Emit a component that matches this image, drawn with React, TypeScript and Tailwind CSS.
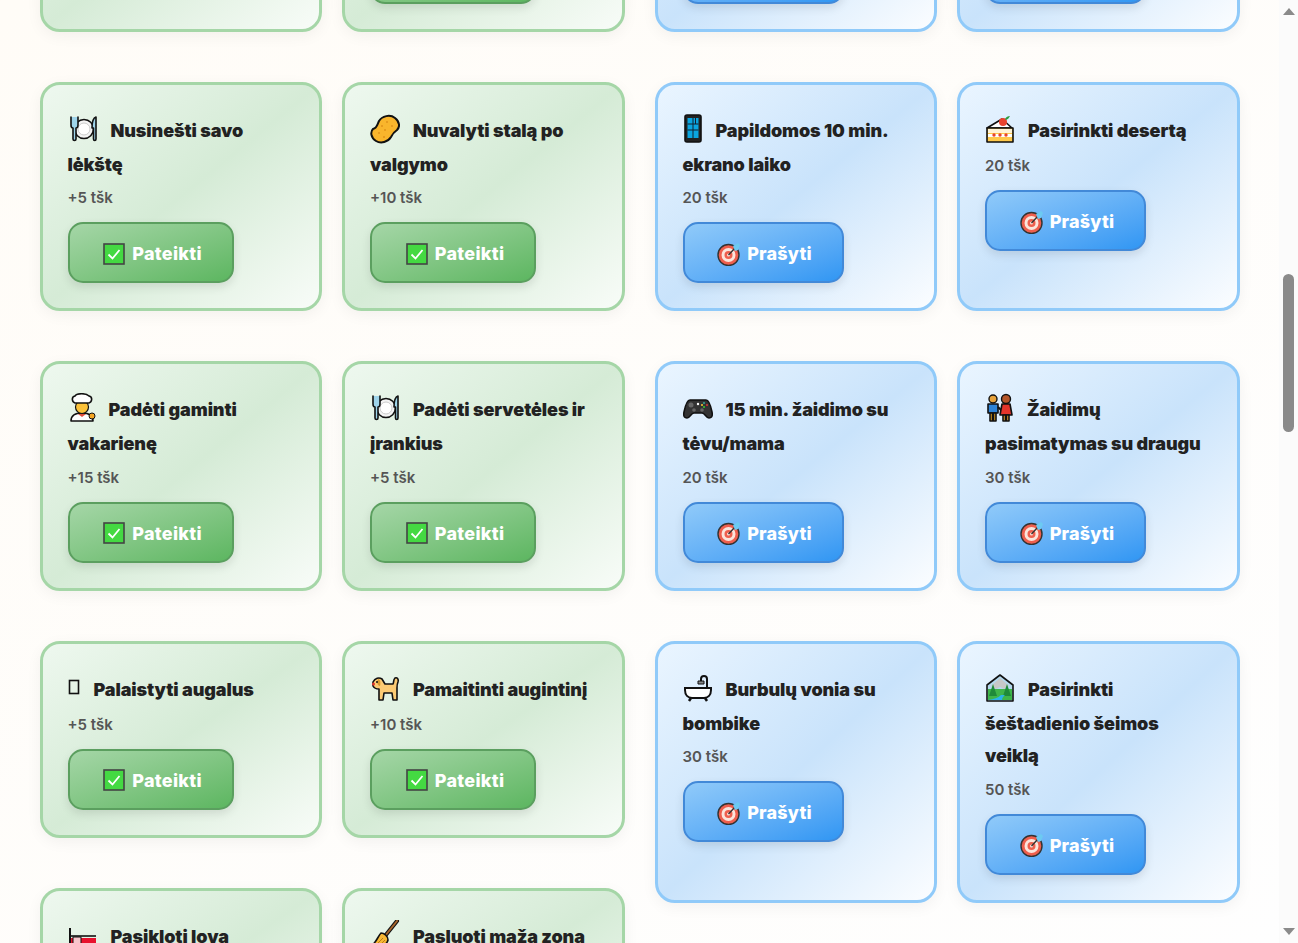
import type { ReactNode } from "react";

const OL = { stroke: "#111", strokeWidth: 1.6, strokeLinejoin: "round" as const, strokeLinecap: "round" as const };

const Svg = ({ w, children }: { w: number; children: ReactNode }) => (
  <svg width={w} height={30} viewBox={`0 0 ${w} 30`} className="mt-[4px] mr-[13px] mb-[5px] inline align-[-12px]">
    {children}
  </svg>
);

const Plate = () => (
  <Svg w={30}>
    <circle cx="16" cy="15" r="9.5" fill="#f4f4f4" {...OL} />
    <circle cx="16" cy="15" r="6" fill="#fff" stroke="#ccc" strokeWidth="1" />
    <path d="M3 3v8c0 2 1 3 2 3v11c0 2 3 2 3 0V14c1 0 2-1 2-3V3" fill="#9fd4ea" {...OL} />
    <path d="M28 3c-3 1-4 5-4 11h1.500v11c0 2 2.500 2 2.500 0Z" fill="#9fd4ea" {...OL} />
  </Svg>
);
const Sponge = () => (
  <Svg w={30}>
    <path d="M3 15c4-1 4-4 6-8 3-5 11-7 16-3s5 9 2 12c-3 2-4 3-6 7-3 5-10 7-15 4S0 18 3 15Z" fill="#f9b52c" stroke="#111" strokeWidth="2" />
    <g fill="#e0931a">
      <circle cx="12" cy="12" r="1" /><circle cx="17" cy="8" r="1" /><circle cx="22" cy="12" r="1" />
      <circle cx="15" cy="16" r="1" /><circle cx="9" cy="19" r="1" /><circle cx="14" cy="23" r="1" />
    </g>
  </Svg>
);
const Phone = () => (
  <Svg w={20}>
    <rect x="2" y="1" width="16" height="27" rx="2" fill="#222" {...OL} />
    <rect x="4.500" y="4" width="11" height="20" fill="#0aa5e0" />
    <path d="M4.500 10h11M4.500 16h11M10 4v20M12.500 4v6" stroke="#123" strokeWidth="1" />
  </Svg>
);
const Cake = () => (
  <Svg w={30}>
    <path d="M2 14 17 5l10 9Z" fill="#fff" {...OL} />
    <path d="M2 14h26v14H2Z" fill="#ffc94a" {...OL} />
    <path d="M3 15h24v4H3Z" fill="#fff3d6" />
    <path d="M3 20h24v3H3Z" fill="#fff" />
    <circle cx="9" cy="21" r="1.700" fill="#e8432e" /><circle cx="15" cy="21" r="1.700" fill="#e8432e" /><circle cx="21" cy="21" r="1.700" fill="#e8432e" />
    <circle cx="18" cy="8" r="4" fill="#e8432e" />
    <path d="M20 5c1-2 3-3 5-3-1 2-2 3-4 4Z" fill="#2c9c3f" />
  </Svg>
);
const Chef = () => (
  <Svg w={28}>
    <path d="M3 28c0-5 4-8 11-8s11 3 11 8Z" fill="#fff" {...OL} />
    <path d="M10 21l4 3 4-3Z" fill="#e04c3a" />
    <circle cx="14" cy="14" r="6.500" fill="#fcc23a" stroke="#111" strokeWidth="1.200" />
    <path d="M7 10c-3-1-4-6 0-7 2-3 11-3 14 0 4 1 3 6 0 7Z" fill="#fff" {...OL} />
    <circle cx="24" cy="23" r="3" fill="#f5a623" stroke="#111" strokeWidth="1" />
  </Svg>
);
const Tofu = () => (
  <Svg w={13}>
    <rect x="1.500" y="7.500" width="9" height="13" fill="none" stroke="#111" strokeWidth="1.600" />
  </Svg>
);
const Dog = () => (
  <Svg w={30}>
    <path d="M3 9c2-4 6-5 9-3l3 5h8c1-1 0-4 2-6 2-1 4 1 3 4-1 2-1 4-1 6l0 12h-4l-1-7h-8l-1 7H9l0-11c-3 0-5-1-6-3Z" fill="#fdcb74" {...OL} />
    <path d="M8 6c2 0 3 3 2 7-2 0-4-3-2-7Z" fill="#d9982f" />
    <circle cx="3.500" cy="11" r="1.500" fill="#e0352b" />
    <circle cx="7" cy="9" r="1" fill="#111" />
  </Svg>
);
const Bed = () => (
  <Svg w={30}>
    <path d="M2 8v21M2 24h26v5" fill="none" stroke="#111" strokeWidth="2" />
    <rect x="3" y="18" width="25" height="6" fill="#e8112d" />
    <rect x="5" y="17" width="8" height="7" fill="#f7c6cc" stroke="#111" strokeWidth="1" />
    <path d="M3 16h25" stroke="#111" strokeWidth="1.600" />
  </Svg>
);
const Broom = () => (
  <Svg w={30}>
    <path d="M27 1 15 16" stroke="#111" strokeWidth="4" strokeLinecap="round" />
    <path d="M27 1 15 16" stroke="#a7662c" strokeWidth="2" strokeLinecap="round" />
    <path d="M11 13c3 0 7 3 7 7-1 4-6 8-13 8-2-2-3-1-3-3 4-2 6-9 9-12Z" fill="#f7b733" {...OL} />
    <path d="M7 24l6-6M10 25l5-5" stroke="#b87a16" strokeWidth="1" />
  </Svg>
);
const Gamepad = () => (
  <Svg w={30}>
    <path d="M7 7h16c3 0 5 7 6 12 1 5-1 6-3 6-3 0-4-5-7-5h-8c-3 0-4 5-7 5-2 0-4-1-3-6 1-5 3-12 6-12Z" fill="#333" {...OL} />
    <circle cx="8" cy="12" r="2.500" fill="#666" /><circle cx="11" cy="17" r="1.800" fill="#666" /><circle cx="19" cy="17" r="1.800" fill="#666" />
    <circle cx="15" cy="11" r="1.200" fill="#fff" />
    <circle cx="21" cy="10" r="1" fill="#3a9" /><circle cx="24" cy="12" r="1" fill="#d33" /><circle cx="21" cy="14" r="1" fill="#3c3" /><circle cx="19" cy="12" r="1" fill="#fc3" />
  </Svg>
);
const People = () => (
  <Svg w={29}>
    <circle cx="8" cy="6" r="4" fill="#e7a33c" stroke="#111" strokeWidth="1.400" />
    <path d="M3 11h10v9H3Z" fill="#2e83d6" {...OL} />
    <path d="M5 20h2.500v8H5ZM8.500 20H11v8H8.500Z" fill="#e5a11a" {...OL} />
    <path d="M13 14l4 4" stroke="#111" strokeWidth="2" />
    <circle cx="21" cy="6" r="4.500" fill="#b5562a" stroke="#111" strokeWidth="1.400" />
    <path d="M17 11h8l2 11H15Z" fill="#e5352b" {...OL} />
    <path d="M18 22h2.500v6H18ZM21.500 22H24v6h-2.500Z" fill="#f0a830" {...OL} />
  </Svg>
);
const Bath = () => (
  <Svg w={30}>
    <path d="M2 15h26v2c0 5-3 8-7 8H9c-4 0-7-3-7-8Z" fill="#fff" stroke="#111" strokeWidth="2" />
    <path d="M8 25l-2 3M22 25l2 3" stroke="#111" strokeWidth="2.500" />
    <path d="M24 15V6c0-4-6-4-6 0v2" fill="none" stroke="#111" strokeWidth="2" />
    <path d="M15 11h6v-3h-6Z" fill="#888" stroke="#111" strokeWidth="1" />
  </Svg>
);
const Landscape = () => (
  <Svg w={30}>
    <path d="M2 28V12L15 2l13 10v16Z" fill="#b4d9ee" {...OL} />
    <path d="M6 13l9-8 9 8-5 3-4-2-4 2Z" fill="#c7c7c7" />
    <path d="M3 16h24v11H3Z" fill="#3fb54a" />
    <path d="M8 11l-4 12h8ZM22 11l-4 12h8Z" fill="#1f8a3a" />
    <path d="M3 27c6-1 10-2 13-5l4 0c-2 2-3 3-3 5Z" fill="#2ab4e8" />
  </Svg>
);
const Check = () => (
  <svg width="22" height="22" viewBox="0 0 22 22">
    <rect x="1" y="1" width="20" height="20" fill="#44d942" stroke="#444" strokeWidth="1.600" />
    <path d="M5.500 11.500 9.500 15.500 16.500 7" fill="none" stroke="#fff" strokeWidth="1.800" />
  </svg>
);
const Target = () => (
  <svg width="24" height="24" viewBox="0 0 24 24">
    <circle cx="11.500" cy="13" r="10.500" fill="#ee5f4e" stroke="#333" strokeWidth="1.400" />
    <circle cx="11.500" cy="13" r="7" fill="#fbe5dc" />
    <circle cx="11.500" cy="13" r="4" fill="#ee5f4e" />
    <circle cx="11.500" cy="13" r="1.500" fill="#fbe5dc" />
    <path d="M11.500 13 18 6" stroke="#333" strokeWidth="1.400" />
    <path d="M16 4l5-3 2 2-2 5-3 1Z" fill="#6ccaf2" />
  </svg>
);

type Item = { icon: ReactNode; title: string; pts: string };

const leftItems: Item[] = [
  { icon: <Sponge />, title: "Išnešti šiukšles", pts: "+5 tšk" },
  { icon: <Broom />, title: "Sudėti žaislus į vietą po žaidimo", pts: "+5 tšk" },
  { icon: <Plate />, title: "Nusinešti savo lėkštę", pts: "+5 tšk" },
  { icon: <Sponge />, title: "Nuvalyti stalą po valgymo", pts: "+10 tšk" },
  { icon: <Chef />, title: "Padėti gaminti vakarienę", pts: "+15 tšk" },
  { icon: <Plate />, title: "Padėti servetėles ir įrankius", pts: "+5 tšk" },
  { icon: <Tofu />, title: "Palaistyti augalus", pts: "+5 tšk" },
  { icon: <Dog />, title: "Pamaitinti augintinį", pts: "+10 tšk" },
  { icon: <Bed />, title: "Pasikloti lovą", pts: "+5 tšk" },
  { icon: <Broom />, title: "Pasluoti mažą zoną", pts: "+5 tšk" },
];

const rightItems: Item[] = [
  { icon: <Gamepad />, title: "Pasirinkti vakaro filmą šeimai", pts: "20 tšk" },
  { icon: <Phone />, title: "Papildomos 5 min. ekrano laiko", pts: "10 tšk" },
  { icon: <Phone />, title: "Papildomos 10 min. ekrano laiko", pts: "20 tšk" },
  { icon: <Cake />, title: "Pasirinkti desertą", pts: "20 tšk" },
  { icon: <Gamepad />, title: "15 min. žaidimo su tėvu/mama", pts: "20 tšk" },
  { icon: <People />, title: "Žaidimų pasimatymas su draugu", pts: "30 tšk" },
  { icon: <Bath />, title: "Burbulų vonia su bombike", pts: "30 tšk" },
  { icon: <Landscape />, title: "Pasirinkti šeštadienio šeimos veiklą", pts: "50 tšk" },
];

const Card = ({ item, kind }: { item: Item; kind: "green" | "blue" }) => {
  const isGreen = kind === "green";
  return (
    <div
      className={
        isGreen
          ? "rounded-[20px] border-[3px] border-[#a5d6a7] bg-gradient-to-br from-[#eef8ef] via-[#d5ebd6] to-[#f8fcf8] p-[25px] shadow-[0_4px_15px_rgba(0,0,0,0.05)]"
          : "rounded-[20px] border-[3px] border-[#90caf9] bg-gradient-to-br from-[#eaf5ff] via-[#c9e3fb] to-[#fbfdff] p-[25px] shadow-[0_4px_15px_rgba(0,0,0,0.05)]"
      }
    >
      <div className="text-[18px] leading-[32.4px] font-black tracking-[-0.1px] text-[#222]">
        {item.icon}
        {item.title}
      </div>
      <div className="mt-[3px] text-[15px] leading-[27px] font-semibold text-[#555]">{item.pts}</div>
      <button
        className={
          isGreen
            ? "mt-[11px] flex h-[61px] w-[166px] items-center justify-center gap-[7px] rounded-[15px] border-2 border-[#5b9f5f] bg-gradient-to-br from-[#a5d6a7] to-[#5cb660] pt-[2px] pl-[4px] text-[18px] font-extrabold tracking-[0.3px] text-white shadow-[0_4px_10px_rgba(0,0,0,0.1)]"
            : "mt-[11px] flex h-[61px] w-[161px] items-center justify-center gap-[6px] rounded-[15px] border-2 border-[#4289d8] bg-gradient-to-br from-[#90caf9] to-[#2f96f3] pt-[2px] pl-[3px] text-[18px] font-extrabold tracking-[0.2px] text-white shadow-[0_4px_10px_rgba(0,0,0,0.1)]"
        }
      >
        {isGreen ? <Check /> : <Target />}
        {isGreen ? "Pateikti" : "Prašyti"}
      </button>
    </div>
  );
};

export default function App() {
  return (
    <div className="flex h-screen overflow-hidden bg-gradient-to-br from-[#fffcf7] to-[#fefefe] font-['Inter','Noto_Sans',sans-serif]">
      <div className="min-w-0 flex-1">
        <div className="mx-auto -mt-[197.4px] grid max-w-[1200px] grid-cols-2 items-start gap-[30px]">
          <div className="grid grid-cols-2 gap-x-5 gap-y-[50px]">
            {leftItems.map((it, i) => (
              <Card key={i} item={it} kind="green" />
            ))}
          </div>
          <div className="grid grid-cols-2 gap-x-5 gap-y-[50px]">
            {rightItems.map((it, i) => (
              <Card key={i} item={it} kind="blue" />
            ))}
          </div>
        </div>
      </div>
      {/* Scrollbar */}
      <div className="flex w-[19px] flex-col items-center justify-between bg-[#fbfbfb] py-[8px]">
        <div className="h-0 w-0 border-x-[6px] border-b-[7px] border-x-transparent border-b-[#8a8a8a]" />
        <div className="mb-auto mt-[259px] h-[158px] w-[11px] rounded-full bg-[#8a8a8a]" />
        <div className="h-0 w-0 border-x-[6px] border-t-[7px] border-x-transparent border-t-[#8a8a8a]" />
      </div>
    </div>
  );
}
